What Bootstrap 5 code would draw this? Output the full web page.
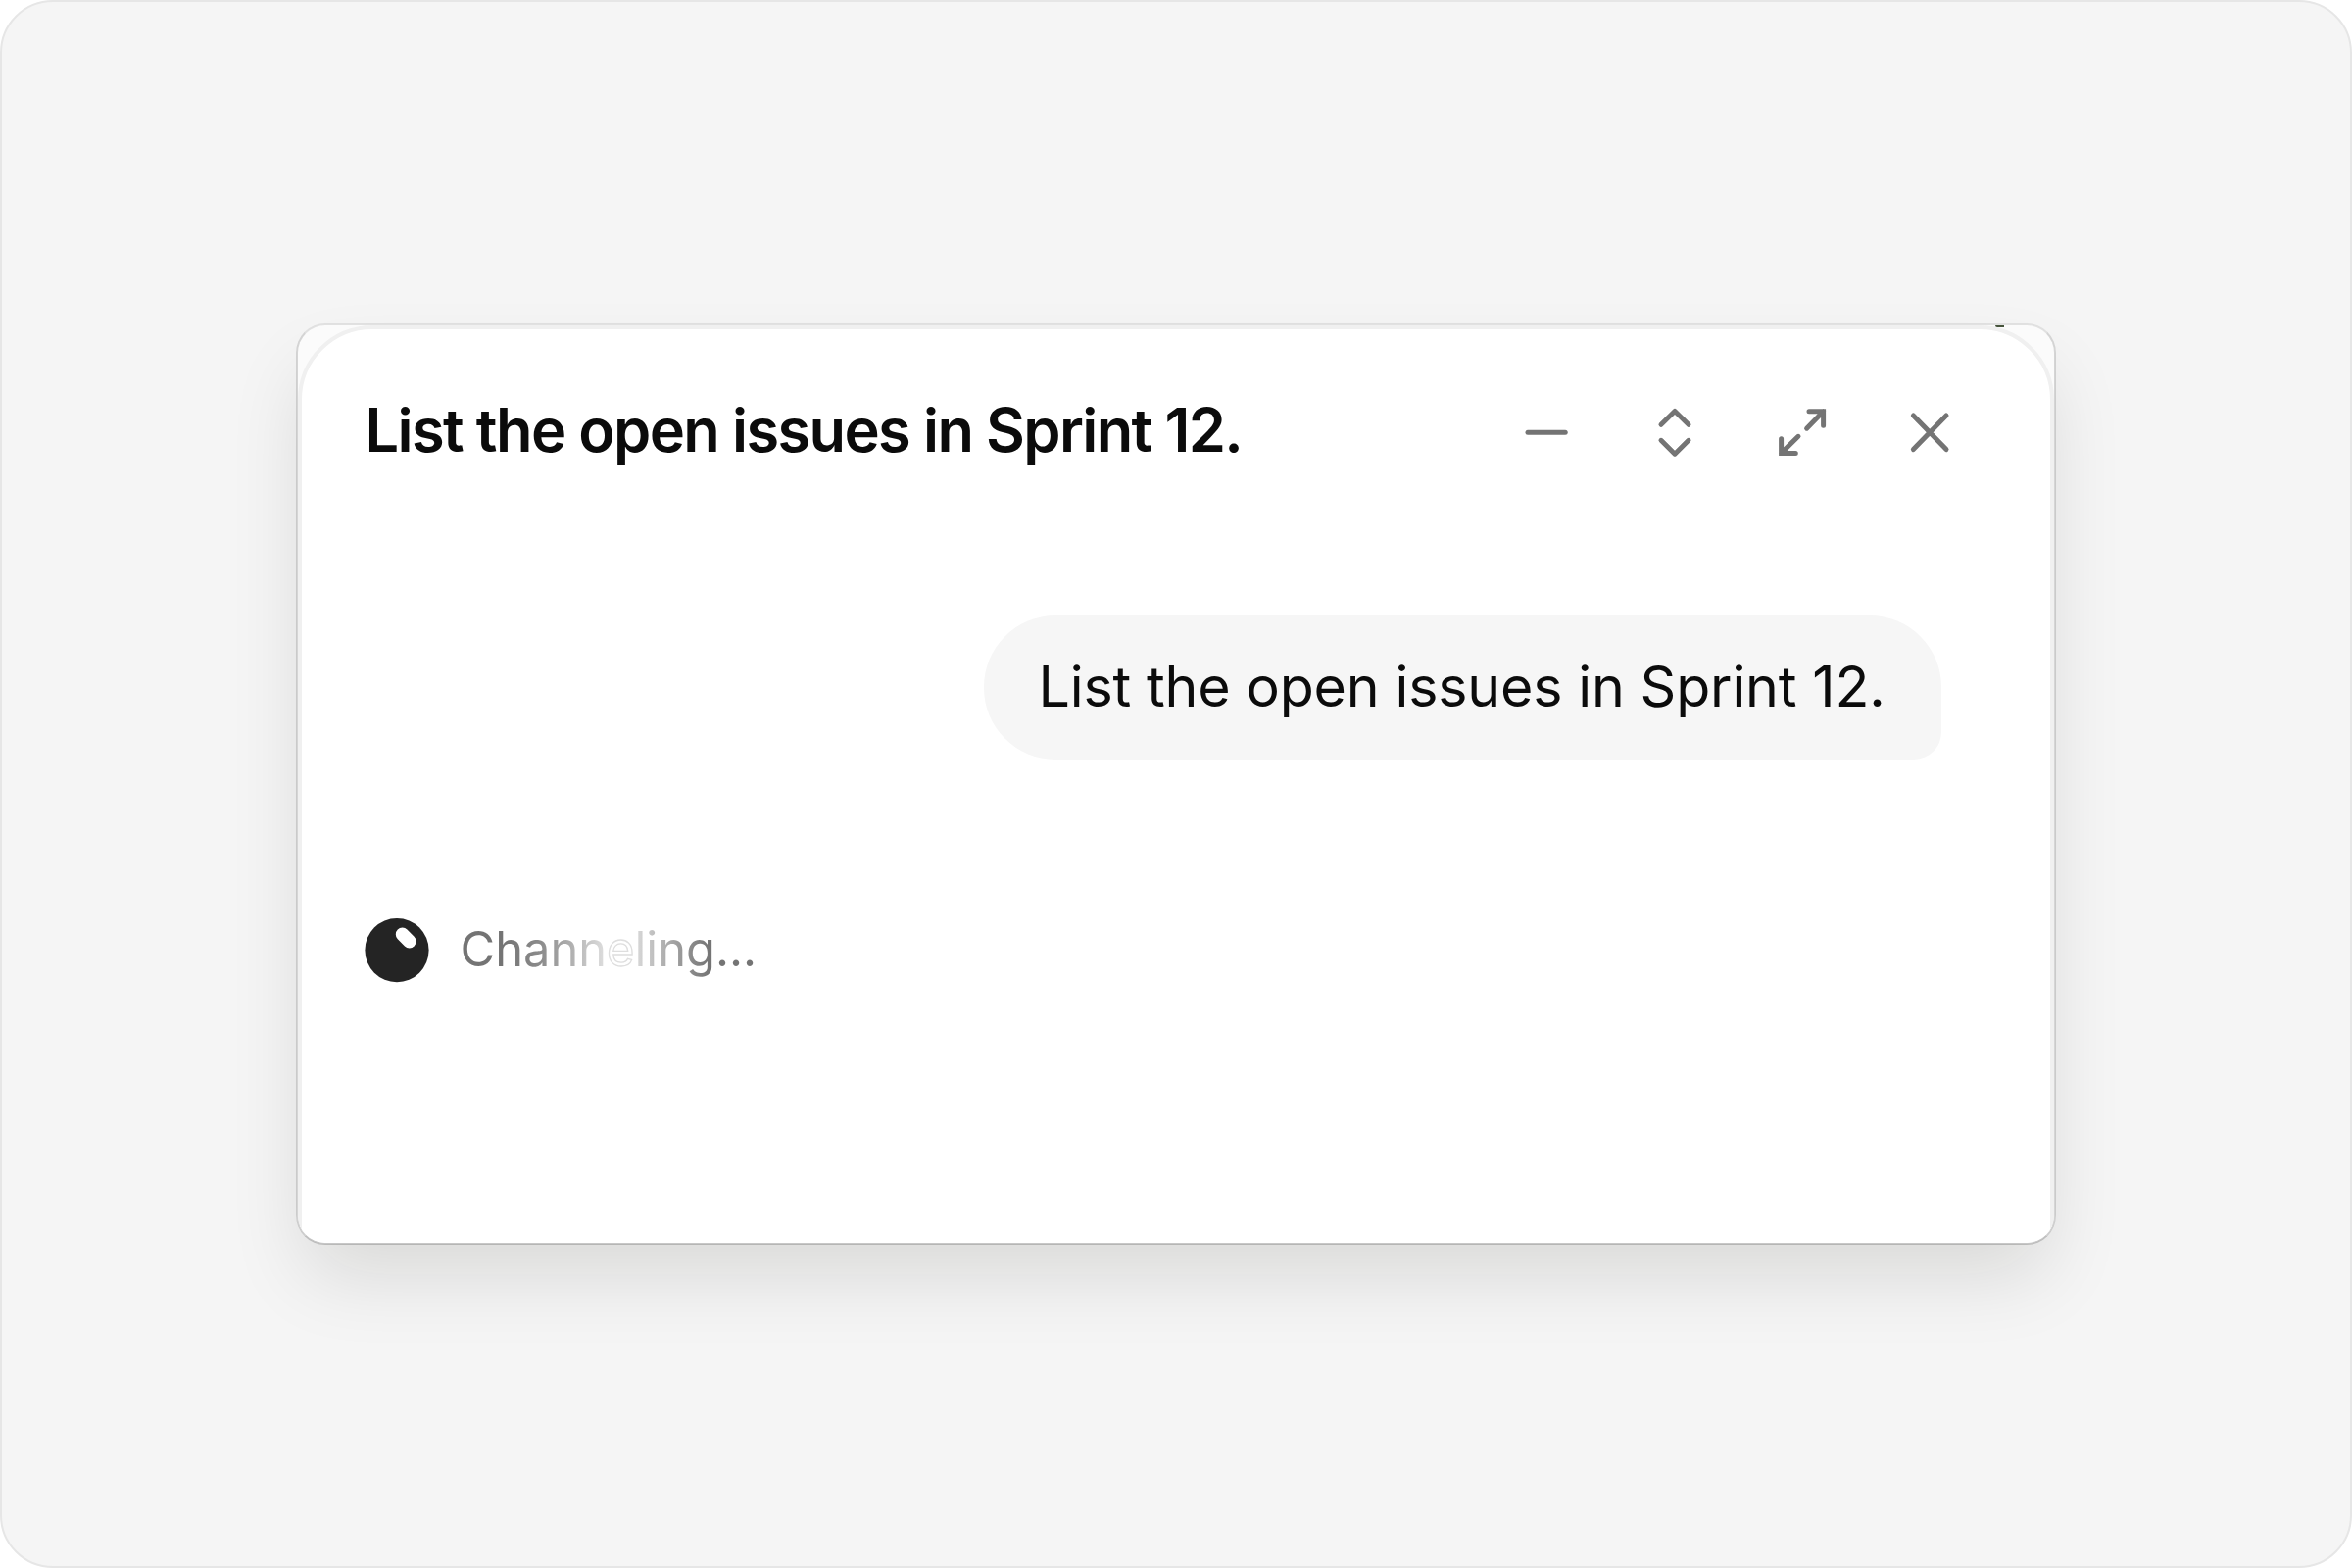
<!DOCTYPE html>
<html lang="en">
<head>
<meta charset="utf-8">
<title>Assistant</title>
<link href="https://cdn.jsdelivr.net/npm/bootstrap@5.3.0/dist/css/bootstrap.min.css" rel="stylesheet">
<style>
  body { background: #fff; font-family: Inter, "Liberation Sans", sans-serif; color: #0b0b0b; }
  .stage { width: 2400px; height: 1600px; background: #f5f5f5; border: 2px solid #e6e6e6; border-radius: 54px; }
  .window-frame { width: 1796px; height: 940px; border: 2px solid; border-color: rgba(0,0,0,.08) rgba(0,0,0,.13) rgba(0,0,0,.19); border-radius: 30px; background: #fbfbfb; background-clip: padding-box; box-shadow: 0 40px 80px -10px rgba(20,20,0,.12); }
  .window-clip { border-radius: 28px; }
  .pane { height: 1010px; background: #fff; border: 4px solid #f0f0f0; border-radius: 76px; padding: 71px 91px 0 64.5px; }
  .corner-speck { top: 0; left: 1732px; width: 9px; height: 2px; background: #46543c; border-radius: 0 0 0 6px; }
  .title-row { height: 64px; }
  .title-text { font-size: 61.3px; line-height: 64px; font-weight: 600; letter-spacing: -1.62px; white-space: nowrap; }
  .tools { gap: 66.2px; color: #747474; }
  .tools .btn { width: 64px; height: 64px; }
  .tools svg { display: block; fill: none; stroke: currentColor; stroke-width: 5; stroke-linecap: round; stroke-linejoin: round; }
  .bubble { margin-top: 157px; margin-right: 20px; width: 977.5px; height: 147px; padding: 0 0 4px 56px; background: #f6f6f6; border-radius: 73px 73px 28px 73px; font-size: 57.3px; line-height: 64px; letter-spacing: -.17px; white-space: nowrap; }
  .status-row { margin-top: 162px; margin-left: -1px; height: 66px; gap: 32px; }
  .status-text { font-size: 48.8px; line-height: 64px; padding-bottom: 2px; white-space: nowrap; }
  .shimmer { color: transparent; -webkit-background-clip: text; background-clip: text; }
  .shimmer-in { background-image: linear-gradient(90deg, #747474 30%, #8c8c8c 55%, #b0b0b0 76%, #e0e0e0 100%); }
  .shimmer-peak { color: #fff; -webkit-text-stroke: 1.3px #dedede; }
  .shimmer-out { background-image: linear-gradient(90deg, #dadada 0%, #b0b0b0 24%, #888 48%, #747474 62%); }
</style>
<script src="https://cdn.jsdelivr.net/npm/bootstrap@5.3.0/dist/js/bootstrap.bundle.min.js"></script>
</head>
<body>
<main class="stage d-flex align-items-center justify-content-center">
  <section class="window-frame">
    <div class="window-clip position-relative overflow-hidden h-100">
      <div class="pane">
        <header class="title-row d-flex align-items-center justify-content-between">
          <h1 class="title-text m-0">List the open issues in Sprint 12.</h1>
          <div class="tools d-flex">
            <button class="btn p-0 border-0 text-reset" aria-label="Minimize"><svg width="64" height="64" viewBox="0 0 64 64"><path d="M13 34.3H51.2"/></svg></button>
            <button class="btn p-0 border-0 text-reset" aria-label="Resize"><svg width="64" height="64" viewBox="0 0 64 64"><path d="M18 26.3L32 12.4L46 26.3M18 42.3L32 56.2L46 42.3"/></svg></button>
            <button class="btn p-0 border-0 text-reset" aria-label="Expand"><svg width="64" height="64" viewBox="0 0 64 64"><path stroke-linejoin="miter" d="M39 12.7H53.6V27.3M53.6 12.7L36.6 30.2M10.6 40.7V55.4H25.3M10.6 55.4L28 38.3"/></svg></button>
            <button class="btn p-0 border-0 text-reset" aria-label="Close"><svg width="64" height="64" viewBox="0 0 64 64"><path d="M15.4 17L49 51.6M49 17L15.4 51.6"/></svg></button>
          </div>
        </header>
        <div class="bubble ms-auto d-flex align-items-center"><span>List the open issues in Sprint 12.</span></div>
        <div class="status-row d-flex align-items-center">
          <svg width="66" height="66" viewBox="0 0 66 66"><circle cx="33" cy="32.6" r="32.6" fill="#242424"/><path d="M38.6 16.4L45.8 23.6" stroke="#fff" stroke-width="13.6" stroke-linecap="round"/></svg>
          <div class="status-text"><span class="shimmer shimmer-in">Chann</span><span class="shimmer-peak">e</span><span class="shimmer shimmer-out">ling...</span></div>
        </div>
      </div>
      <span class="corner-speck position-absolute"></span>
    </div>
  </section>
</main>
</body>
</html>
